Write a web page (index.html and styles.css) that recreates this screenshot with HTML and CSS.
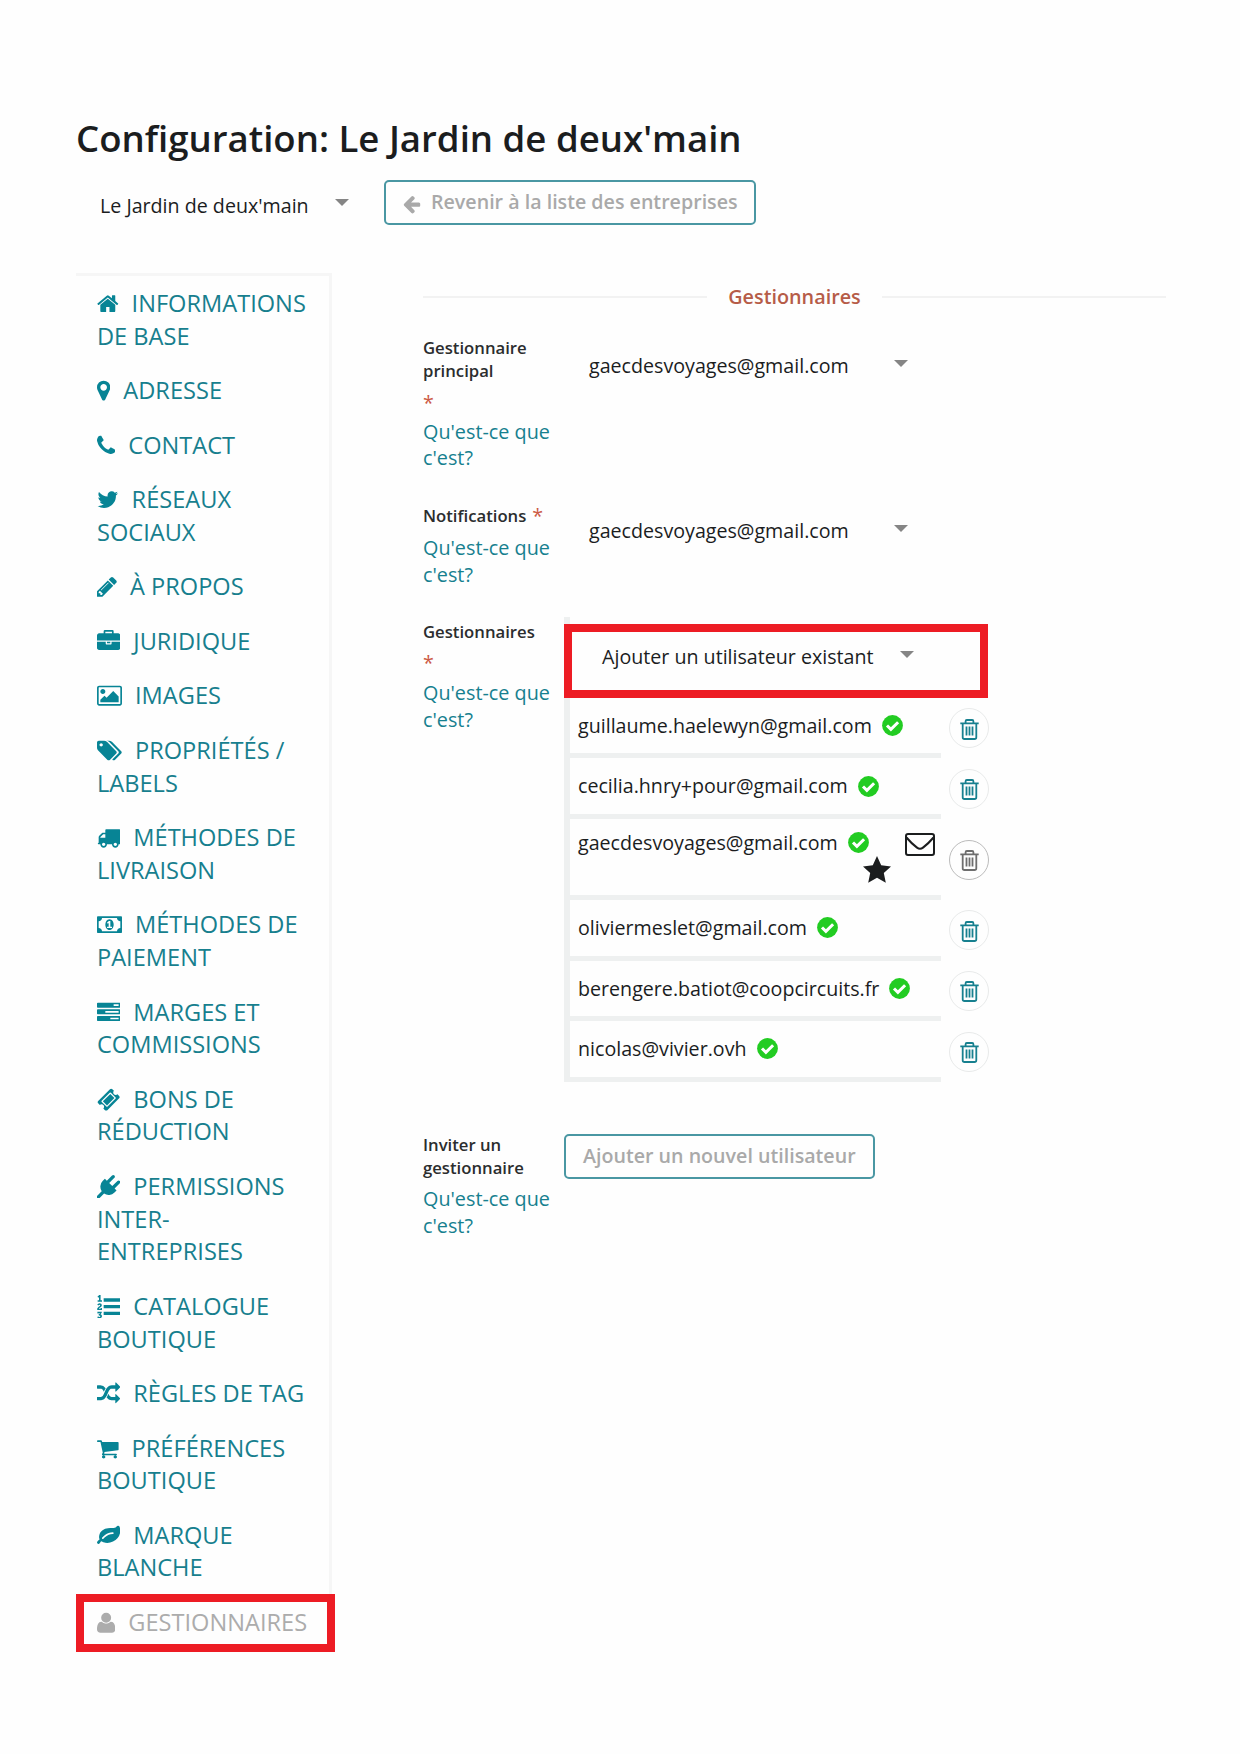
FILE: index.html
```html
<!DOCTYPE html>
<html lang="fr">
<head>
<meta charset="utf-8">
<title>Configuration: Le Jardin de deux'main</title>
<link rel="stylesheet" href="styles.css">
</head>
<body>
<svg class="defs" aria-hidden="true">
  <symbol id="trash" viewBox="0 0 19 21"><path d="M.3 4.3h18.4M5.6 4V2.2Q5.6 1 6.8 1h5.4q1.2 0 1.2 1.2V4M2.7 4.5v13.7q0 1.8 1.8 1.8h10q1.8 0 1.8-1.8V4.500M6.500 7.600v9M9.500 7.600v9M12.500 7.600v9" fill="none" stroke="currentColor" stroke-width="1.800"/></symbol>
  <symbol id="check" viewBox="0 0 21 21"><circle cx="10.500" cy="10.500" r="10.400" fill="#22cc22"/><path d="M5 10.500l3.900 3.900 7.200-7.200" fill="none" stroke="#fff" stroke-width="3"/></symbol>
</svg>
<div class="page">
  <h1 class="title">Configuration: Le Jardin de deux'main</h1>
  <div class="toolbar">
    <div class="select select-shop"><span class="t-shop">Le Jardin de deux'main</span><i class="caret"></i></div>
    <a class="button button-back"><svg class="arrow" viewBox="128 0 1600 1792"><path d="M1664 896v128q0 53-32.500 90.500t-84.500 37.500h-704l293 294q38 36 38 90t-38 90l-75 76q-37 37-90 37-52 0-91-37l-651-652q-37-37-37-90 0-52 37-91l651-650q38-38 91-38 52 0 90 38l75 74q38 38 38 91t-38 91l-293 293h704q52 0 84.500 37.500t32.500 90.500z"/></svg><span>Revenir à la liste des entreprises</span></a>
  </div>
  <div class="layout">
    <ul class="menu">
      <li><svg class="w1664" viewBox="64 0 1664 1792"><path d="M1472 992v480q0 26-19 45t-45 19h-384v-384h-256v384h-384q-26 0-45-19t-19-45v-480q0-1 .5-3t.5-3l575-474 575 474q1 2 1 6zm223-69l-62 74q-8 9-21 11h-3q-13 0-21-7l-692-577-692 577q-12 8-24 7-13-2-21-11l-62-74q-8-10-7-23.500t11-21.500l719-599q32-26 76-26t76 26l244 204v-195q0-14 9-23t23-9h192q14 0 23 9t9 23v408l219 182q10 8 11 21.500t-7 23.500z"/></svg>INFORMATIONS<br>DE BASE</li>
      <li><svg class="w1024" viewBox="384 0 1024 1792"><path d="M1152 640q0-106-75-181t-181-75-181 75-75 181 75 181 181 75 181-75 75-181zm256 0q0 109-33 179l-364 774q-16 33-47.500 52t-67.500 19-67.500-19-46.500-52l-365-774q-33-70-33-179 0-212 150-362t362-150 362 150 150 362z"/></svg>ADRESSE</li>
      <li><svg class="w1408" viewBox="192 0 1408 1792"><path d="M1600 1240q0 27-10 70.500t-21 68.500q-21 50-122 106-94 51-186 51-27 0-53-3.500t-57.500-12.500-47-14.500-55.500-20.500-49-18q-98-35-175-83-127-79-264-216t-216-264q-48-77-83-175-3-9-18-49t-20.500-55.500-14.500-47-12.500-57.500-3.500-53q0-92 51-186 56-101 106-122 25-11 68.500-21t70.500-10q14 0 21 3 18 6 53 76 11 19 30 54t35 63.500 31 53.500q3 4 17.500 25t21.500 35.500 7 28.500q0 20-28.500 50t-62 55-62 53-28.500 46q0 9 5 22.500t8.500 20.500 14 24 11.500 19q76 137 174 235t235 174q2 1 19 11.500t24 14 20.500 8.500 22.500 5q18 0 46-28.500t53-62 55-62 50-28.500q14 0 28.500 7t35.500 21.500 25 17.500q25 15 53.500 31t63.500 35 54 30q70 35 76 53 3 7 3 21z"/></svg>CONTACT</li>
      <li><svg class="w1664" viewBox="64 0 1664 1792"><path d="M1684 408q-67 98-162 167 1 14 1 42 0 130-38 259.500t-115.500 248.500-184.500 210.500-258 146-323 54.500q-271 0-496-145 35 4 78 4 225 0 401-138-105-2-188-64.500t-114-159.500q33 5 61 5 43 0 85-11-112-23-185.500-111.500t-73.500-205.500v-4q68 38 146 41-66-44-105-115t-39-154q0-88 44-163 121 149 294.500 238.500t371.500 99.500q-8-38-8-74 0-134 94.500-228.500t228.500-94.500q140 0 236 102 109-21 205-78-37 115-142 178 93-10 186-50z"/></svg>RÉSEAUX<br>SOCIAUX</li>
      <li><svg class="w1536" viewBox="128 0 1536 1792"><path d="M491 1536l91-91-235-235-91 91v107h128v128h107zm523-928q0-22-22-22-10 0-17 7l-542 542q-7 7-7 17 0 22 22 22 10 0 17-7l542-542q7-7 7-17zm-54-192l416 416-832 832h-416v-416zm683 96q0 53-37 90l-166 166-416-416 166-165q36-38 90-38 53 0 91 38l235 234q37 39 37 91z"/></svg>À PROPOS</li>
      <li><svg class="w1792" viewBox="0 0 1792 1792"><path d="M640 256h512v-128h-512v128zm1152 640v480q0 66-47 113t-113 47h-1472q-66 0-113-47t-47-113v-480h672v160q0 26 19 45t45 19h320q26 0 45-19t19-45v-160h672zm-768 0v128h-256v-128h256zm768-480v384h-1792v-384q0-66 47-113t113-47h352v-160q0-40 28-68t68-28h576q40 0 68 28t28 68v160h352q66 0 113 47t47 113z"/></svg>JURIDIQUE</li>
      <li><svg class="w1920" viewBox="-64 0 1920 1792"><path d="M576 576q0 80-56 136t-136 56-136-56-56-136 56-136 136-56 136 56 56 136zm1024 384v448h-1408v-192l320-320 160 160 512-512zm96-704h-1600q-13 0-22.500 9.500t-9.500 22.500v1216q0 13 9.500 22.500t22.500 9.500h1600q13 0 22.500-9.500t9.500-22.500v-1216q0-13-9.500-22.500t-22.500-9.500zm160 32v1216q0 66-47 113t-113 47h-1600q-66 0-113-47t-47-113v-1216q0-66 47-113t113-47h1600q66 0 113 47t47 113z"/></svg>IMAGES</li>
      <li><svg class="w1920" viewBox="-64 0 1920 1792"><path d="M384 448q0-53-37.500-90.500t-90.500-37.500-90.500 37.500-37.500 90.500 37.500 90.500 90.500 37.500 90.500-37.500 37.500-90.500zm1067 576q0 53-37 90l-491 492q-39 37-91 37-53 0-90-37l-715-716q-38-37-64.500-101t-26.500-117v-416q0-52 38-90t90-38h416q53 0 117 26.500t102 64.500l715 714q37 39 37 91zm384 0q0 53-37 90l-491 492q-39 37-91 37-36 0-59-14t-53-45l470-470q37-37 37-90 0-52-37-91l-715-714q-38-38-102-64.500t-117-26.500h224q53 0 117 26.500t102 64.500l715 714q37 39 37 91z"/></svg>PROPRIÉTÉS /<br>LABELS</li>
      <li><svg class="w1792" viewBox="0 0 1792 1792"><path d="M640 1408q0-52-38-90t-90-38-90 38-38 90 38 90 90 38 90-38 38-90zm-384-512h384v-256h-158q-13 0-22 9l-195 195q-9 9-9 22v30zm1280 512q0-52-38-90t-90-38-90 38-38 90 38 90 90 38 90-38 38-90zm256-1088v1024q0 15-4 26.500t-13.500 18.500-16.500 11.500-23.500 6-22.500 2-25.500 0-22.500-.5q0 106-75 181t-181 75-181-75-75-181h-384q0 106-75 181t-181 75-181-75-75-181h-64q-3 0-22.500.5t-25.500 0-22.500-2-23.500-6-16.500-11.500-13.500-18.500-4-26.500q0-26 19-45t45-19v-320q0-8-.5-35t0-38 2.500-34.500 6.500-37 14-30.500 22.500-30l198-198q19-19 50.500-32t58.500-13h160v-192q0-26 19-45t45-19h1024q26 0 45 19t19 45z"/></svg>MÉTHODES DE<br>LIVRAISON</li>
      <li><svg class="w1920" viewBox="0 0 1920 1792"><path d="M768 1152h384v-96h-128v-448h-114l-148 137 77 80q42-37 55-57h2v288h-128v96zm512-256q0 70-21 142t-59.500 134-101.500 101-138 39-138-39-101.500-101-59.500-134-21-142 21-142 59.500-134 101.500-101 138-39 138 39 101.500 101 59.500 134 21 142zm512 256v-512q-106 0-181-75t-75-181h-1152q0 106-75 181t-181 75v512q106 0 181 75t75 181h1152q0-106 75-181t181-75zm128-832v1152q0 26-19 45t-45 19h-1792q-26 0-45-19t-19-45v-1152q0-26 19-45t45-19h1792q26 0 45 19t19 45z"/></svg>MÉTHODES DE<br>PAIEMENT</li>
      <li><svg class="w1792" viewBox="0 0 1792 1792"><path d="M1024 1408h640v-128h-640v128zm-384-512h1024v-128h-1024v128zm640-512h384v-128h-384v128zm512 832v256q0 26-19 45t-45 19h-1664q-26 0-45-19t-19-45v-256q0-26 19-45t45-19h1664q26 0 45 19t19 45zm0-512v256q0 26-19 45t-45 19h-1664q-26 0-45-19t-19-45v-256q0-26 19-45t45-19h1664q26 0 45 19t19 45zm0-512v256q0 26-19 45t-45 19h-1664q-26 0-45-19t-19-45v-256q0-26 19-45t45-19h1664q26 0 45 19t19 45z"/></svg>MARGES ET<br>COMMISSIONS</li>
      <li><svg class="w1792" viewBox="0 0 1792 1792"><path d="M1024 452l316 316-572 572-316-316zm-211 979l618-618q19-19 19-45t-19-45l-362-362q-18-18-45-18t-45 18l-618 618q-19 19-19 45t19 45l362 362q18 18 45 18t45-18zm889-637l-907 908q-37 37-90.500 37t-90.500-37l-126-126q56-56 56-136t-56-136-136-56-136 56l-125-126q-37-37-37-90.500t37-90.500l907-906q37-37 90.500-37t90.500 37l125 125q-56 56-56 136t56 136 136 56 136-56l126 125q37 37 37 90.500t-37 90.500z"/></svg>BONS DE<br>RÉDUCTION</li>
      <li><svg class="w1792" viewBox="0 0 1792 1792"><path d="M1755 453q37 38 37 90.500t-37 90.500l-401 400 150 150-160 160q-163 163-389.500 186.500t-411.500-100.500l-362 362h-181v-181l362-362q-124-185-100.500-411.500t186.500-389.500l160-160 150 150 400-401q38-37 91-37t90 37 37 90.500-37 90.500l-400 401 234 234 401-400q38-37 91-37t90 37z"/></svg>PERMISSIONS<br>INTER-<br>ENTREPRISES</li>
      <li><svg class="w1792" viewBox="0 0 1792 1792"><path d="M381 1620q0 80-54.500 126t-135.500 46q-106 0-172-66l57-88q49 45 106 45 29 0 50.500-14.500t21.500-42.500q0-64-105-56l-26-56q8-10 32.500-43.500t42.500-54 37-38.500v-1q-16 0-48.500 1t-48.500 1v53h-106v-152h333v88l-95 115q51 12 81 49t30 88zm2-627v159h-362q-6-36-6-54 0-51 23.500-93t56.500-68 66-47.500 56.500-43.500 23.500-45q0-25-14.500-38.500t-39.500-13.500q-46 0-81 58l-85-59q24-51 71.500-79.500t105.500-28.500q73 0 123 41.500t50 112.500q0 50-34 91.500t-75 64.500-75.500 50.500-35.500 52.500h127v-60h105zM384 413v99h-335v-99h107q0-41 .5-122t.5-121v-12h-2q-8 17-50 54l-71-76 136-127h106v404h108zM512 256h1280v256h-1280zM512 768h1280v256h-1280zM512 1280h1280v256h-1280z"/></svg>CATALOGUE<br>BOUTIQUE</li>
      <li><svg class="w1792" viewBox="0 0 1792 1792"><path d="M666 481q-60 92-137 273-22-45-37-72.500t-40.500-63.500-51-56.500-63-35-81.500-14.500h-224q-14 0-23-9t-9-23v-192q0-14 9-23t23-9h224q250 0 410 225zm1126 799q0 14-9 23l-320 320q-9 9-23 9-13 0-22.500-9.500t-9.500-22.500v-192q-32 0-85 .5t-81 1-73-1-71-5-64-10.500-63-18.500-58-28.500-59-40-55-53.500-56-69.500q59-93 136-273 22 45 37 72.500t40.500 63.500 51 56.500 63 35 81.500 14.500h256v-192q0-14 9-23t23-9q12 0 24 10l319 319q9 9 9 23zm0-896q0 14-9 23l-320 320q-9 9-23 9-13 0-22.500-9.500t-9.500-22.500v-192h-256q-48 0-87 15t-69 45-51 61.500-45 77.500q-32 62-78 171-29 66-49.500 111t-54 105-64 100-74 83-90 68.500-106.500 42-128 16.500h-224q-14 0-23-9t-9-23v-192q0-14 9-23t23-9h224q48 0 87-15t69-45 51-61.500 45-77.500q32-62 78-171 29-66 49.500-111t54-105 64-100 74-83 90-68.500 106.500-42 128-16.500h256v-192q0-14 9-23t23-9q12 0 24 10l319 319q9 9 9 23z"/></svg>RÈGLES DE TAG</li>
      <li><svg class="w1664" viewBox="64 0 1664 1792"><path d="M704 1536q0 52-38 90t-90 38-90-38-38-90 38-90 90-38 90 38 38 90zm896 0q0 52-38 90t-90 38-90-38-38-90 38-90 90-38 90 38 38 90zm128-1088v512q0 24-16.500 42.500t-40.500 21.500l-1044 122q13 60 13 70 0 16-24 64h920q26 0 45 19t19 45-19 45-45 19h-1024q-26 0-45-19t-19-45q0-11 8-31.500t16-36 21.500-40 15.500-29.500l-177-823h-204q-26 0-45-19t-19-45 19-45 45-19h256q16 0 28.500 6.500t19.500 15.500 13 24.500 8 26 5.500 29.500 4.500 26h1201q26 0 45 19t19 45z"/></svg>PRÉFÉRENCES<br>BOUTIQUE</li>
      <li><svg class="w1792" viewBox="0 0 1792 1792"><path d="M1280 704q0-26-19-45t-45-19q-172 0-318 49.500t-259.500 134-235.500 219.500q-19 21-19 45 0 26 19 45t45 19q24 0 45-19 27-24 74-71t67-66q137-124 268.500-176t313.500-52q26 0 45-19t19-45zm512-198q0 95-20 193-46 224-184.500 383t-357.500 268q-214 108-438 108-148 0-286-47-15-5-88-42t-96-37q-16 0-39.500 32t-45 70-52.500 70-60 32q-43 0-63.500-17.500t-45.500-59.500q-2-4-6-11t-5.500-10-3-9.500-1.500-13.500q0-35 31-73.500t68-65.500 68-56 31-48q0-4-14-38t-16-44q-9-51-9-104 0-115 43.500-220t119-184.500 170.500-139 204-95.500q55-18 145-25.500t179.500-9 178.500-6 163.500-24 113.500-56.500l29.500-29.500 29.500-28 27-20 36.500-16 43.500-4.500q39 0 70.500 46t47.500 112 24 124 8 96z"/></svg>MARQUE<br>BLANCHE</li>
      <li class="active"><svg class="w1408" viewBox="192 0 1408 1792"><path d="M1600 1405q0 120-73 189.500t-194 69.500h-874q-121 0-194-69.500t-73-189.500q0-53 3.500-103.500t14-109 26.500-108.500 43-97.500 62-81 85.500-53.500 111.500-20q9 0 42 21.500t74.500 48 108 48 133.500 21.500 133.500-21.500 108-48 74.500-48 42-21.500q61 0 111.500 20t85.500 53.500 62 81 43 97.500 26.500 108.500 14 109 3.500 103.500zm-320-893q0 159-112.500 271.500t-271.500 112.500-271.500-112.500-112.500-271.500 112.500-271.500 271.500-112.500 271.500 112.500 112.500 271.500z"/></svg>GESTIONNAIRES<span class="highlight"></span></li>
    </ul>
    <main class="panel">
      <h2 class="legend"><span>Gestionnaires</span></h2>
      <div class="row row-owner">
        <div class="label"><b>Gestionnaire<br>principal</b><em class="req">*</em><a>Qu'est-ce que<br>c'est?</a></div>
        <div class="select select-mail"><span>gaecdesvoyages@gmail.com</span><i class="caret"></i></div>
      </div>
      <div class="row row-notif">
        <div class="label"><div class="inline-label"><b>Notifications</b><em class="req">*</em></div><a>Qu'est-ce que<br>c'est?</a></div>
        <div class="select select-mail"><span>gaecdesvoyages@gmail.com</span><i class="caret"></i></div>
      </div>
      <div class="row row-users">
        <div class="label"><b>Gestionnaires</b><em class="req">*</em><a>Qu'est-ce que<br>c'est?</a></div>
        <div class="users">
          <div class="select select-add"><span class="t-add">Ajouter un utilisateur existant</span><i class="caret"></i><span class="highlight"></span></div>
          <div class="user"><div class="cell"><span>guillaume.haelewyn@gmail.com</span><svg class="check"><use href="#check"/></svg></div><a class="trash"><svg><use href="#trash"/></svg></a></div>
          <div class="user"><div class="cell"><span>cecilia.hnry+pour@gmail.com</span><svg class="check"><use href="#check"/></svg></div><a class="trash"><svg><use href="#trash"/></svg></a></div>
          <div class="user tall"><div class="cell"><span>gaecdesvoyages@gmail.com</span><svg class="check"><use href="#check"/></svg>
            <svg class="star" viewBox="0 0 28 27"><path d="M14 0l4.200 9.200 9.800 1.200-7.200 6.500 2 9.900L14 21.800l-8.800 5 2-9.900L0 10.400l9.800-1.200z"/></svg>
            <svg class="mail" viewBox="0 0 30 23"><g fill="none" stroke="currentColor" stroke-width="2"><rect x="1" y="1" width="28" height="21" rx="2"/><path d="M1.500 4.500Q6 10 12 14.600q3 2.400 6 0Q24 10 28.500 4.500"/></g></svg>
          </div><a class="trash off"><svg><use href="#trash"/></svg></a></div>
          <div class="user"><div class="cell"><span>oliviermeslet@gmail.com</span><svg class="check"><use href="#check"/></svg></div><a class="trash"><svg><use href="#trash"/></svg></a></div>
          <div class="user"><div class="cell"><span>berengere.batiot@coopcircuits.fr</span><svg class="check"><use href="#check"/></svg></div><a class="trash"><svg><use href="#trash"/></svg></a></div>
          <div class="user"><div class="cell"><span>nicolas@vivier.ovh</span><svg class="check"><use href="#check"/></svg></div><a class="trash"><svg><use href="#trash"/></svg></a></div>
        </div>
      </div>
      <div class="row">
        <div class="label"><b>Inviter un<br>gestionnaire</b><a class="help-gap">Qu'est-ce que<br>c'est?</a></div>
        <a class="button button-new"><span>Ajouter un nouvel utilisateur</span></a>
      </div>
    </main>
  </div>
</div>
</body>
</html>
```
FILE: styles.css
```css
* { box-sizing: border-box; }
body {
  margin: 0;
  background: #fefefe;
  color: #1b1d1e;
  font: 19.650px/26.700px "Open Sans", sans-serif;
}
.defs { position: absolute; width: 0; height: 0; }
.page { padding: 114px 74px 0 76px; height: 1754px; white-space: nowrap; }
.title { margin: 0; font-size: 36.600px; line-height: 48px; font-weight: 600; height: 66px; }
.toolbar { display: flex; height: 93px; align-items: flex-start; }
.select { display: flex; }
.select span { flex: none; }
.caret {
  flex: none;
  border: 7px solid transparent;
  border-top: 7px solid #858585;
  border-bottom: 0;
  align-self: flex-start;
}
.select-shop { width: 308px; padding: 12.600px 0 0 24px; }
.select-shop span { width: 235px; }
.select-shop .caret { margin-top: 6px; }
.button {
  display: flex;
  align-items: center;
  height: 45px;
  border: 2px solid #4a97a3;
  border-radius: 5px;
  color: #a9a9a9;
  font-weight: 600;
}
.button-back { width: 372px; padding-left: 17px; }
.button-new { width: 311px; padding-left: 17px; }
.arrow { width: 18px; height: 20px; fill: #a9a9a9; margin: 2px 9px 0 0; }
.button-back span { padding-left: 1px; }
.layout { display: grid; grid-template-columns: 256px 743px; column-gap: 91px; align-items: start; }

.menu {
  margin: 0;
  padding: 0 0 0 21px;
  list-style: none;
  border-top: 3px solid #f6f6f6;
  border-right: 3px solid #f6f6f6;
  color: #177f8e;
  font-size: 23.600px;
  line-height: 32.700px;
}
.menu li { padding: 11px 0 10.800px; position: relative; }
.menu svg { height: 23.300px; fill: #078495; vertical-align: -3.330px; margin-right: 13px; }
.menu .w1024 { width: 13.300px; }
.menu .w1408 { width: 18.300px; }
.menu .w1536 { width: 20px; }
.menu .w1664 { width: 21.600px; }
.menu .w1792 { width: 23.300px; }
.menu .w1920 { width: 25px; }
.menu .active { color: #acacac; }
.menu .active svg { fill: #acacac; }
.highlight { position: absolute; border: 8px solid #ed1c24; }
.menu .highlight { left: -21px; top: -.5px; width: 259px; height: 58px; }

.panel { padding-top: 11px; }
.legend {
  display: flex;
  align-items: center;
  gap: 21px;
  margin: 0 0 26.700px;
  color: #b65c48;
  font-size: 19.800px;
  line-height: 26.700px;
  font-weight: 600;
}
.legend::before, .legend::after { content: ""; flex: 1; height: 2px; background: #f2f2f2; }
.row { display: grid; grid-template-columns: 141px 1fr; align-items: start; }
.row-owner { height: 167.600px; }
.row-notif { height: 116.400px; }
.row-users { height: 512.600px; }
.label b { display: block; font-size: 16.700px; line-height: 22.600px; font-weight: 600; color: #2b2d2e; }
.label a { display: block; color: #17808f; font-size: 19.800px; }
.req { display: block; font-style: normal; color: #cc5a45; margin-top: 7.500px; margin-bottom: 1.800px; }
.row-users .req { margin-top: 6.500px; margin-bottom: 3px; }
.inline-label { display: flex; gap: 6px; height: 30.300px; }
.inline-label .req { margin: -2px 0 0; }
.help-gap { margin-top: 6.800px; }
.select-mail { padding: 16px 0 0 25px; }
.select-mail span { width: 305px; }
.select-mail .caret { margin-top: 7px; }
.row-notif .select-mail { padding-top: 13.400px; }

.users { width: 425px; margin-top: -4px; border-left: 6px solid #eef0f0; }
.select-add { position: relative; height: 80.500px; padding: 26.800px 0 0 32px; }
.select-add .t-add { width: 297.500px; }
.select-add .caret { margin-top: 7px; }
.select-add .highlight { left: -6px; top: 6.500px; width: 424px; height: 74px; }
.user { display: flex; align-items: center; gap: 8px; height: 60.600px; }
.user.tall { height: 81px; }
.cell {
  position: relative;
  display: flex;
  align-items: flex-start;
  width: 371px;
  height: 100%;
  padding: 14.900px 0 0 8px;
  border-bottom: 5.500px solid #eef0f0;
}
.tall .cell { padding-top: 10.500px; }
.check { width: 21px; height: 21px; margin: 2.200px 0 0 10px; }
.star { position: absolute; left: 293px; top: 37px; width: 28px; height: 27px; fill: #1b1d1e; }
.mail { position: absolute; left: 335px; top: 14px; width: 30px; height: 23px; }
.trash {
  flex: none;
  display: flex;
  justify-content: center;
  align-items: center;
  width: 40px;
  height: 40px;
  border: 1px solid #e8eaea;
  border-radius: 50%;
  color: #17808f;
}
.trash svg { width: 19px; height: 21px; margin: 2px 0 0 1px; }
.trash.off { border-color: #bbb; color: #6e6e6e; }
```
